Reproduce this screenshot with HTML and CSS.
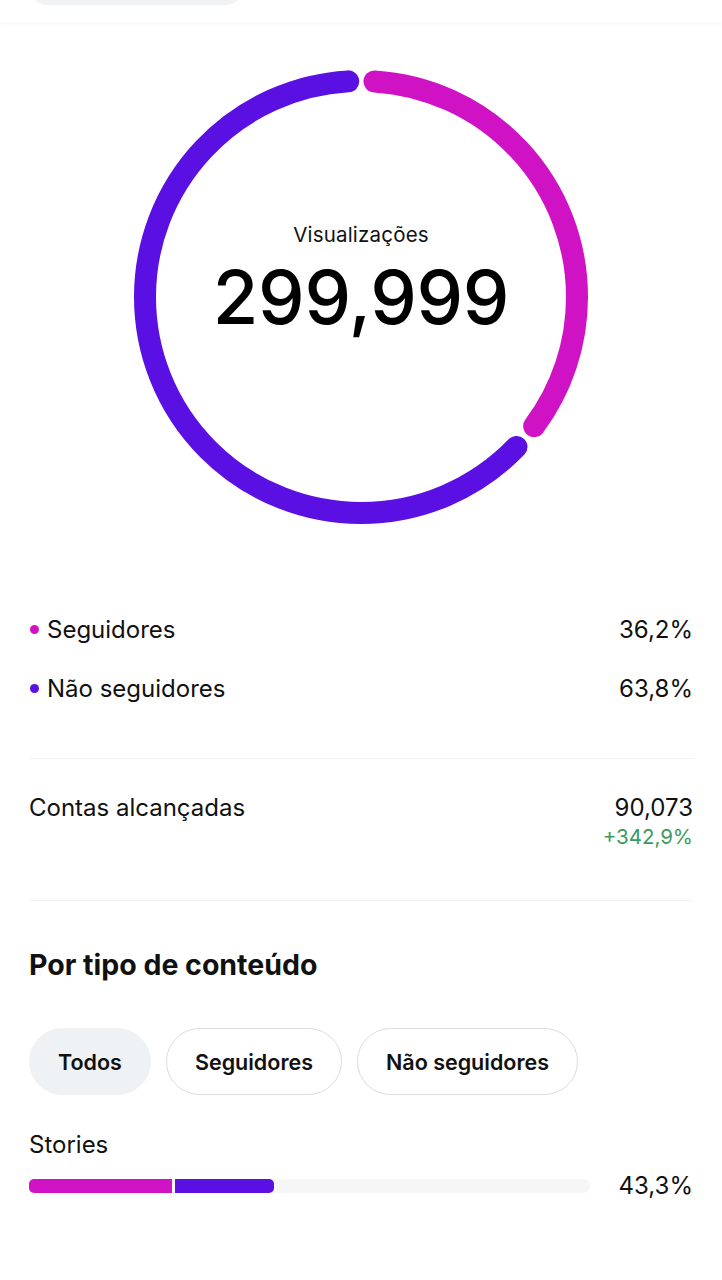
FILE: index.html
```html
<!DOCTYPE html>
<html lang="pt">
<head>
  <meta charset="UTF-8" />
  <meta name="viewport" content="width=device-width, initial-scale=1.0"/>
  <title>Visualizações</title>
  <link rel="stylesheet" href="styles.css">
</head>
<body>
  <header class="top-bar">
    <div class="top-pill"></div>
  </header>

  <section class="ring-box">
    <svg class="ring" width="460" height="460" viewBox="0 0 460 460">
      <g transform="rotate(-90 230 230)">
        <circle class="arc arc-followers" cx="230" cy="230" r="216"
                stroke-dasharray="464 1400" stroke-dashoffset="-13.5" />
        <circle class="arc arc-others" cx="230" cy="230" r="216"
                stroke-dasharray="839 1400" stroke-dashoffset="-504.8" />
      </g>
    </svg>
    <div class="ring-label">
      <div class="ring-title">Visualizações</div>
      <div class="ring-value">299,999</div>
    </div>
  </section>

  <section class="legend">
    <div class="legend-row">
      <span class="legend-name"><i class="dot dot-followers"></i>Seguidores</span>
      <span class="legend-value">36,2%</span>
    </div>
    <div class="legend-row">
      <span class="legend-name"><i class="dot dot-others"></i>Não seguidores</span>
      <span class="legend-value">63,8%</span>
    </div>
  </section>

  <section class="reach">
    <span class="reach-name">Contas alcançadas</span>
    <div class="reach-numbers">
      <div class="reach-value">90,073</div>
      <div class="reach-delta">+342,9%</div>
    </div>
  </section>

  <section class="content-type">
    <h2 class="section-title">Por tipo de conteúdo</h2>
    <div class="chips">
      <button class="chip chip-active">Todos</button>
      <button class="chip">Seguidores</button>
      <button class="chip">Não seguidores</button>
    </div>
    <div class="type-row">
      <div class="type-name">Stories</div>
      <div class="type-line">
        <div class="bar">
          <div class="bar-part bar-followers" style="width: 143px"></div>
          <div class="bar-part bar-others" style="width: 99px"></div>
        </div>
        <span class="type-value">43,3%</span>
      </div>
    </div>
  </section>
</body>
</html>
```

FILE: styles.css
```css
body {
  margin: 0;
  padding: 0;
  background-color: #fff;
  font-family: Inter, "Noto Sans", sans-serif;
  color: #111;
}
.top-bar {
  height: 22px;
  overflow: hidden;
  padding: 0 28px;
  box-shadow: 0 2px 5px rgba(0, 0, 0, 0.035);
}
.top-pill {
  width: 217px;
  height: 40px;
  margin-top: -35px;
  border-radius: 20px;
  background-color: #f0f2f3;
}
.ring-box {
  display: grid;
  justify-items: center;
  margin-top: 45px;
}
.ring,
.ring-label {
  grid-area: 1 / 1;
}
.arc {
  fill: none;
  stroke-width: 22;
  stroke-linecap: round;
}
.arc-followers {
  stroke: #cf12c4;
}
.arc-others {
  stroke: #5a0fe3;
}
.ring-label {
  align-self: start;
  margin-top: 155px;
  text-align: center;
}
.ring-title {
  font-size: 20.5px;
  line-height: 25px;
  letter-spacing: 0.2px;
}
.ring-value {
  font-size: 74px;
  font-weight: 500;
  line-height: 100px;
  letter-spacing: -0.3px;
  color: #000;
}
.legend {
  margin-top: 73px;
  padding: 0 29px;
}
.legend-row {
  display: flex;
  justify-content: space-between;
  align-items: center;
  height: 59px;
  font-size: 24px;
}
.legend-name {
  display: flex;
  align-items: center;
}
.dot {
  width: 9px;
  height: 9px;
  border-radius: 50%;
  margin: 0 8px 0 1px;
}
.dot-followers {
  background-color: #cf12c4;
}
.dot-others {
  background-color: #5a0fe3;
}
.reach {
  display: flex;
  justify-content: space-between;
  align-items: flex-start;
  margin: 40px 29px 0;
  padding: 35px 0 48px;
  border-top: 1px solid #f1f1f1;
  border-bottom: 1px solid #f1f1f1;
  font-size: 24px;
}
.reach-numbers {
  text-align: right;
}
.reach-value {
  line-height: 28px;
}
.reach-delta {
  font-size: 20.5px;
  line-height: 30px;
  color: #3d9a5e;
}
.reach-name {
  line-height: 28px;
}
.content-type {
  padding: 0 29px;
}
.section-title {
  margin: 47px 0 0;
  font-size: 28.5px;
  font-weight: 700;
  line-height: 34px;
}
.chips {
  display: flex;
  gap: 15px;
  margin-top: 46px;
}
.chip {
  height: 67px;
  padding: 0 28px;
  border-radius: 34px;
  border: 1.5px solid #dcdcdc;
  background-color: #fff;
  font-family: Inter, "Noto Sans", sans-serif;
  font-size: 21.5px;
  font-weight: 600;
  color: #111;
}
.chip-active {
  border-color: #eff2f4;
  background-color: #eff2f4;
}
.type-name {
  margin-top: 34px;
  font-size: 24px;
  line-height: 32px;
}
.type-line {
  display: flex;
  align-items: center;
  justify-content: space-between;
  margin-top: 10px;
}
.bar {
  display: flex;
  gap: 3px;
  width: 561px;
  height: 14px;
  border-radius: 7px;
  background-color: #f6f6f6;
}
.bar-part {
  height: 14px;
}
.bar-followers {
  background-color: #cf12c4;
  border-radius: 5px 0 0 5px;
}
.bar-others {
  background-color: #5a0fe3;
  border-radius: 0 5px 5px 0;
}
.type-value {
  font-size: 24px;
}
```
